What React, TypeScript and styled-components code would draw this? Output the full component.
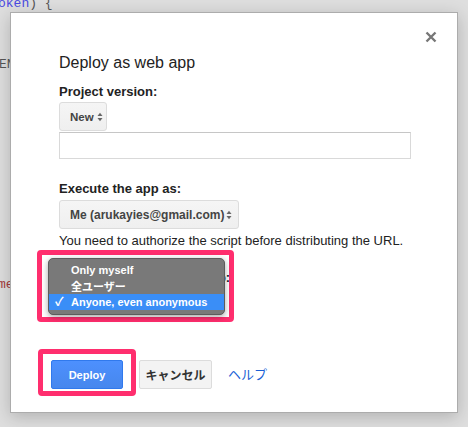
import React from "react";
import styled, { createGlobalStyle } from "styled-components";

const Global = createGlobalStyle`
  html, body { margin: 0; padding: 0; }
  body { font-family: "Liberation Sans", Arial, "Noto Sans CJK JP", sans-serif; }
`;

const Backdrop = styled.div`
  position: relative;
  width: 468px;
  height: 427px;
  overflow: hidden;
  background: #dedede;
`;

const CodeLayer = styled.div`
  display: flex;
  flex-direction: column;
  font-family: "Liberation Mono", monospace;
  font-size: 13px;
  line-height: 15px;
  color: #555;
`;

const CodeLine = styled.div<{ $gap: number; $indent: number }>`
  margin-top: ${(p) => p.$gap}px;
  margin-left: ${(p) => p.$indent}px;
  white-space: pre;
`;

const Kw = styled.span<{ $c: string }>`
  color: ${(p) => p.$c};
`;

const Dialog = styled.div`
  position: absolute;
  left: 10px;
  top: 12px;
  width: 448px;
  height: 401px;
  box-sizing: border-box;
  background: #fff;
  border: 1px solid #acacac;
  box-shadow: 0 4px 16px rgba(0, 0, 0, 0.2);
  padding: 18px 20px 0 48px;
  display: flex;
  flex-direction: column;
  align-items: flex-start;
`;

const Close = styled.button`
  align-self: flex-end;
  width: 12px;
  height: 12px;
  padding: 0;
  border: 0;
  background: transparent;
  display: flex;
`;

const Title = styled.div`
  margin-top: 10px;
  font-size: 16px;
  line-height: 20px;
  color: #222;
`;

const Label = styled.div<{ $mt: number }>`
  margin-top: ${(p) => p.$mt}px;
  font-size: 13px;
  line-height: 16px;
  font-weight: bold;
  color: #222;
`;

const Select = styled.div<{ $w: number; $mt: number; $small?: boolean; $h?: number }>`
  margin-top: ${(p) => p.$mt}px;
  width: ${(p) => p.$w}px;
  height: ${(p) => p.$h ?? 29}px;
  box-sizing: border-box;
  display: flex;
  align-items: center;
  justify-content: space-between;
  padding: 0 ${(p) => (p.$small ? 3 : 6)}px 0 10px;
  background: linear-gradient(#f5f5f5, #efefef);
  border: 1px solid #dcdcdc;
  border-radius: 3px;
  font-size: ${(p) => (p.$small ? 11.5 : 12)}px;
  font-weight: bold;
  color: #444;
`;

const TextInput = styled.div`
  margin-top: 1px;
  width: 352px;
  height: 27px;
  box-sizing: border-box;
  border: 1px solid #d9d9d9;
  border-top-color: #c6c6c6;
`;

const Note = styled.div`
  margin-top: 4px;
  font-size: 13px;
  line-height: 16px;
  color: #222;
`;

const AccessSection = styled.div`
  position: relative;
  margin-top: 21px;
`;

const Highlight = styled.div`
  border: 5px solid #ff2e6e;
  border-radius: 4px;
  box-sizing: border-box;
`;

const MenuHighlight = styled(Highlight)`
  position: absolute;
  left: -22px;
  top: -20px;
  width: 197px;
  height: 72px;
`;

const Menu = styled.div`
  position: absolute;
  left: -11px;
  top: -12px;
  width: 177px;
  height: 57px;
  box-sizing: border-box;
  background: #797979;
  border: 1px solid #5c5c5c;
  border-radius: 5px;
  padding: 3px 0 4px;
  box-shadow: 0 2px 6px rgba(0, 0, 0, 0.35);
  display: flex;
  flex-direction: column;
`;

const MenuItem = styled.div<{ $sel?: boolean }>`
  height: 16px;
  display: flex;
  align-items: center;
  font-size: 11px;
  font-weight: bold;
  color: #fff;
  background: ${(p) => (p.$sel ? "#3a8ef7" : "transparent")};
`;

const Check = styled.span`
  width: 22px;
  box-sizing: border-box;
  padding-left: 6px;
  font-size: 12px;
  line-height: 16px;
`;

const ButtonRow = styled.div`
  margin-top: 37px;
  margin-left: -21px;
  display: flex;
  align-items: flex-start;
`;

const DeployHighlight = styled(Highlight)`
  padding: 6px 8px 2px 8px;
`;

const Actions = styled.div`
  margin: 11px 0 0 3px;
  display: flex;
  align-items: center;
  gap: 16px;
`;

const Button = styled.button<{ $primary?: boolean }>`
  height: 29px;
  box-sizing: border-box;
  border-radius: 2px;
  font-family: "Liberation Sans", Arial, "Noto Sans CJK JP", sans-serif;
  font-weight: bold;
  padding: 0;
  display: flex;
  align-items: center;
  justify-content: center;
  ${(p) =>
    p.$primary
      ? `width: 72px; font-size: 11px; color: #fff; background: linear-gradient(#4d90fe, #4787ed); border: 1px solid #3079ed;`
      : `width: 73px; font-size: 12px; color: #333; background: #f3f3f3; border: 1px solid #dcdcdc;`}
`;

const HelpLink = styled.a`
  font-size: 13px;
  line-height: 29px;
  color: #1a5fd6;
  text-decoration: none;
  font-family: "Liberation Sans", Arial, "Noto Sans CJK JP", sans-serif;
`;

const Arrows = () => (
  <svg width="6" height="10" viewBox="0 0 6 10">
    <path d="M0.5 4 L3 0.8 L5.5 4 Z" fill="#666" />
    <path d="M0.5 6 L3 9.2 L5.5 6 Z" fill="#666" />
  </svg>
);

export default function App() {
  return (
    <>
      <Global />
      <Backdrop>
        <CodeLayer>
          <CodeLine $gap={-4} $indent={-2}>
            <Kw $c="#4a4ae0">oken</Kw>) {"{"}
          </CodeLine>
          <CodeLine $gap={46} $indent={-1}>EN</CodeLine>
          <CodeLine $gap={205} $indent={-2}>
            <Kw $c="#a33a3a">me</Kw>
          </CodeLine>
        </CodeLayer>
        <Dialog>
          <Close aria-label="close">
            <svg width="12" height="12" viewBox="0 0 12 12">
              <path d="M1.5 1.5 L10.5 10.5 M10.5 1.5 L1.5 10.5" stroke="#777" strokeWidth="2.4" />
            </svg>
          </Close>
          <Title>Deploy as web app</Title>
          <Label $mt={11}>Project version:</Label>
          <Select $w={48} $mt={2} $small>
            New <Arrows />
          </Select>
          <TextInput />
          <Label $mt={22}>Execute the app as:</Label>
          <Select $w={180} $mt={3}>
            Me (arukayies@gmail.com) <Arrows />
          </Select>
          <Note>You need to authorize the script before distributing the URL.</Note>
          <AccessSection>
            <Label $mt={0}>Who has access to the app:</Label>
            <Select $w={160} $mt={0} $h={26}>
              Anyone, even anonymous <Arrows />
            </Select>
            <MenuHighlight />
            <Menu>
              <MenuItem>
                <Check />Only myself
              </MenuItem>
              <MenuItem>
                <Check />全ユーザー
              </MenuItem>
              <MenuItem $sel>
                <Check>✓</Check>Anyone, even anonymous
              </MenuItem>
            </Menu>
          </AccessSection>
          <ButtonRow>
            <DeployHighlight>
              <Button $primary>Deploy</Button>
            </DeployHighlight>
            <Actions>
              <Button>キャンセル</Button>
              <HelpLink href="#">ヘルプ</HelpLink>
            </Actions>
          </ButtonRow>
        </Dialog>
      </Backdrop>
    </>
  );
}
